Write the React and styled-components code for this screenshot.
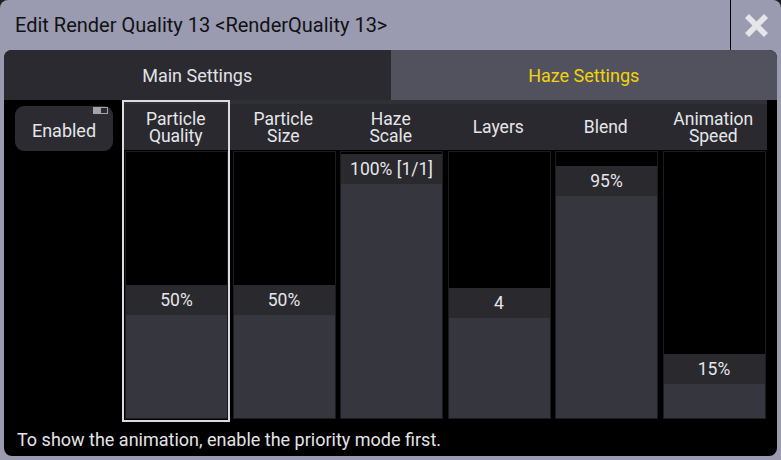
import React from 'react';
import styled, { createGlobalStyle } from 'styled-components';

const GlobalStyle = createGlobalStyle`
  html, body {
    margin: 0;
    padding: 0;
    background: #1e1e22;
  }
  body {
    font-family: Roboto, 'Liberation Sans', sans-serif;
  }
`;

const Window = styled.div`
  width: 781px;
  height: 460px;
  background: #9a9bb0;
  border-radius: 8px 8px 0 0;
  display: flex;
  flex-direction: column;
  overflow: hidden;
`;

const TitleBar = styled.div`
  display: flex;
  height: 50px;
  flex: none;
`;

const Title = styled.div`
  flex: 1;
  display: flex;
  align-items: center;
  padding-left: 15px;
  font-size: 20px;
  color: #111114;
`;

const CloseButton = styled.div`
  width: 50px;
  border-left: 1px solid #000;
  display: flex;
  align-items: center;
  justify-content: center;
`;

const Panel = styled.div`
  flex: 1;
  margin: 0 4px 4px 4px;
  background: #000;
  border-radius: 8px;
  display: flex;
  flex-direction: column;
  overflow: hidden;
`;

const Tabs = styled.div`
  display: flex;
  height: 50px;
  flex: none;
`;

const Tab = styled.div`
  flex: 1;
  display: flex;
  align-items: center;
  justify-content: center;
  font-size: 18px;
  background: ${props => props.$active ? '#52525e' : '#2a2a30'};
  color: ${props => props.$active ? '#f2d20c' : '#e2e2e6'};
`;

const Body = styled.div`
  flex: 1;
  display: flex;
  flex-direction: column;
  padding: 0 10px 0 11px;
`;

const Row = styled.div`
  display: flex;
  gap: 9px;
  height: 322px;
`;

const EnabledButton = styled.div`
  position: relative;
  width: 98px;
  height: 45px;
  margin-top: 6px;
  padding-top: 4px;
  box-sizing: border-box;
  border-radius: 9px;
  background: #2b2b31;
  color: #e6e6ea;
  font-size: 18px;
  display: flex;
  align-items: center;
  justify-content: center;
`;

const ToggleMark = styled.div`
  position: absolute;
  top: 1px;
  right: 5px;
  width: 15px;
  height: 7px;
  background: #a3a3a8;
  display: flex;
  justify-content: flex-end;
  padding: 1px;
  box-sizing: border-box;

  &::after {
    content: '';
    width: 6px;
    background: #2b2b31;
  }
`;

const Faders = styled.div`
  display: flex;
`;

const Column = styled.div`
  width: 107.5px;
  display: flex;
  flex-direction: column;
  padding: 0 1.5px 3px 3px;
  box-sizing: border-box;
  outline: ${props => props.$selected ? '2.5px solid #dcdce0' : 'none'};
  outline-offset: -2.5px;
`;

const Header = styled.div`
  height: 50px;
  flex: none;
  margin: 0 -1.5px 0 -3px;
  box-sizing: border-box;
  border-top: 4px solid #303037;
  padding-top: 2px;
  background: #29292f;
  color: #e6e6ea;
  font-size: 17.5px;
  line-height: 17.5px;
  text-align: center;
  display: flex;
  align-items: center;
  justify-content: center;
`;

const Track = styled.div`
  flex: 1;
  margin-top: 1px;
  border: 1px solid #1b1b20;
  background: #000;
  display: flex;
  flex-direction: column;
`;

const Spacer = styled.div`
  flex: none;
`;

const ValueLabel = styled.div`
  height: 30px;
  flex: none;
  background: #29292e;
  color: #e6e6ea;
  font-size: 17.5px;
  display: flex;
  align-items: center;
  justify-content: center;
`;

const Fill = styled.div`
  flex: 1;
  background: #36363f;
`;

const Note = styled.div`
  margin-top: 7px;
  padding-left: 2px;
  font-size: 18px;
  color: #e4e4e8;
`;

const faders = [
  { label: ['Particle', 'Quality'], value: '50%', offset: 133, selected: true },
  { label: ['Particle', 'Size'], value: '50%', offset: 133 },
  { label: ['Haze', 'Scale'], value: '100% [1/1]', offset: 2 },
  { label: ['Layers'], value: '4', offset: 136 },
  { label: ['Blend'], value: '95%', offset: 14 },
  { label: ['Animation', 'Speed'], value: '15%', offset: 202 },
];

const CloseIcon = () => (
  <svg width="23" height="23" viewBox="0 0 23 23">
    <path
      d="M4 0 L11.5 7.5 L19 0 L23 4 L15.5 11.5 L23 19 L19 23 L11.5 15.5 L4 23 L0 19 L7.5 11.5 L0 4 Z"
      fill="#e6e6ea"
    />
  </svg>
);

const App = () => {
  return (
    <>
      <GlobalStyle />
      <Window>
        <TitleBar>
          <Title>Edit Render Quality 13 &lt;RenderQuality 13&gt;</Title>
          <CloseButton><CloseIcon /></CloseButton>
        </TitleBar>
        <Panel>
          <Tabs>
            <Tab>Main Settings</Tab>
            <Tab $active>Haze Settings</Tab>
          </Tabs>
          <Body>
            <Row>
              <EnabledButton>
                Enabled
                <ToggleMark />
              </EnabledButton>
              <Faders>
                {faders.map(f => (
                  <Column key={f.label.join(' ')} $selected={f.selected}>
                    <Header>
                      <div>{f.label.map(l => <div key={l}>{l}</div>)}</div>
                    </Header>
                    <Track>
                      <Spacer style={{ height: f.offset }} />
                      <ValueLabel>{f.value}</ValueLabel>
                      <Fill />
                    </Track>
                  </Column>
                ))}
              </Faders>
            </Row>
            <Note>To show the animation, enable the priority mode first.</Note>
          </Body>
        </Panel>
      </Window>
    </>
  );
};

export default App;
